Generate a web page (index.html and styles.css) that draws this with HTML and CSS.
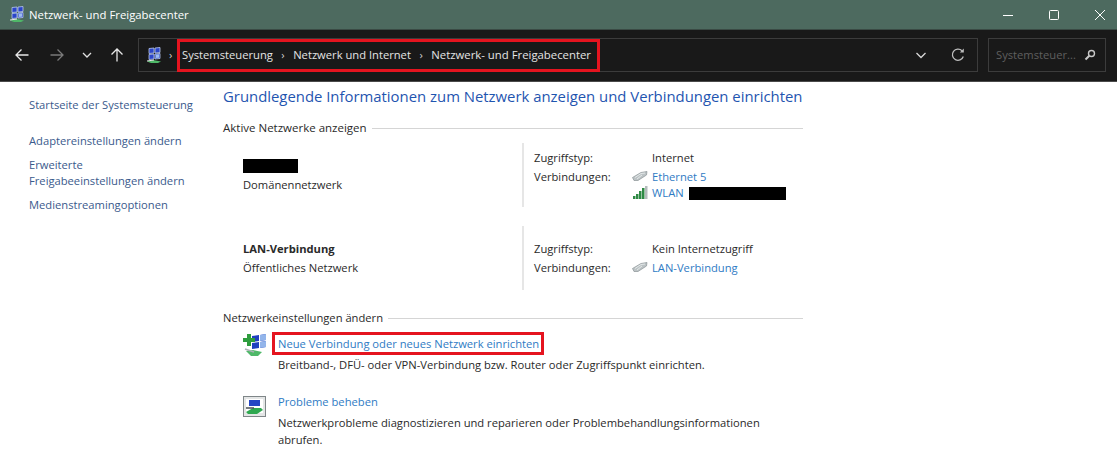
FILE: index.html
```html
<!DOCTYPE html>
<html lang="de">
<head>
<meta charset="utf-8">
<title>Netzwerk- und Freigabecenter</title>
<link rel="stylesheet" href="styles.css">
</head>
<body>
<header class="titlebar">
  <div class="title-left">
    <svg class="app-icon" width="16" height="17" viewBox="0 0 16 17"><path d="M3 1.500l5-.5v5l-5 .5zM9 1l5-.5v5L9 6zM3 7.500L8 7v5l-5 .5zM9 7l5-.5v5L9 12z" fill="#2b45c8" stroke="#b9c8ee" stroke-width=".8"/><path d="M10 7.500l3-.3v3.600l-3 .3z" fill="#9dbcf0"/><path d="M1 14.500l6-1.500 8 1.500-3 1.500H5z" fill="#4fb868"/><path d="M1 14l7-1" stroke="#e6e6e6"/></svg>
    <span class="title-text">Netzwerk- und Freigabecenter</span>
  </div>
  <div class="win-controls">
    <svg width="12" height="12" viewBox="0 0 12 12"><path d="M1 6.500h10" stroke="#fff"/></svg>
    <svg width="12" height="12" viewBox="0 0 12 12"><rect x="1.500" y="1.500" width="9" height="9" rx="1" fill="none" stroke="#fff"/></svg>
    <svg width="12" height="12" viewBox="0 0 12 12"><path d="M1 1l10 10M11 1L1 11" stroke="#fff"/></svg>
  </div>
</header>
<nav class="toolbar">
  <div class="nav-buttons">
    <svg width="16" height="16" viewBox="0 0 16 16"><path d="M14.500 8H2M7.500 2.500L2 8l5.500 5.500" fill="none" stroke="#e8e8e8" stroke-width="1.300"/></svg>
    <svg width="16" height="16" viewBox="0 0 16 16"><path d="M1.500 8H14M8.500 2.500L14 8l-5.500 5.500" fill="none" stroke="#7a7a7a" stroke-width="1.300"/></svg>
    <svg class="small" width="10" height="10" viewBox="0 0 10 10"><path d="M1 3l4 4 4-4" fill="none" stroke="#e0e0e0" stroke-width="1.300"/></svg>
    <svg width="16" height="16" viewBox="0 0 16 16"><path d="M8 14.500V2M2.500 7.500L8 2l5.500 5.500" fill="none" stroke="#e8e8e8" stroke-width="1.300"/></svg>
  </div>
  <div class="address">
    <div class="crumb-root">
      <svg width="16" height="17" viewBox="0 0 16 17"><path d="M3 1.500l5-.5v5l-5 .5zM9 1l5-.5v5L9 6zM3 7.500L8 7v5l-5 .5zM9 7l5-.5v5L9 12z" fill="#2b45c8" stroke="#b9c8ee" stroke-width=".8"/><path d="M10 7.500l3-.3v3.600l-3 .3z" fill="#9dbcf0"/><path d="M1 14.500l6-1.500 8 1.500-3 1.500H5z" fill="#4fb868"/><path d="M1 14l7-1" stroke="#e6e6e6"/></svg>
      <span class="sep">›</span>
    </div>
    <div class="crumbs">
      <span>Systemsteuerung</span><span class="sep">›</span><span>Netzwerk und Internet</span><span class="sep">›</span><span class="crumb-last">Netzwerk- und Freigabecenter</span>
    </div>
    <div class="address-tools">
      <svg width="12" height="12" viewBox="0 0 12 12"><path d="M1.500 4L6 8.500 10.500 4" fill="none" stroke="#d8d8d8" stroke-width="1.300"/></svg>
      <svg width="16" height="16" viewBox="0 0 16 16"><path d="M13.300 9.500A5.600 5.600 0 1 1 12 3.800" fill="none" stroke="#bdbdbd" stroke-width="1.300"/><path d="M13.800 1.500v4h-4z" fill="#bdbdbd"/></svg>
    </div>
  </div>
  <div class="search">
    <span>Systemsteuer...</span>
    <svg width="12" height="12" viewBox="0 0 12 12"><circle cx="7.500" cy="4.500" r="3" fill="none" stroke="#c8c8c8" stroke-width="1.400"/><path d="M5.300 6.700L1.500 10.500" stroke="#c8c8c8" stroke-width="2"/></svg>
  </div>
</nav>
<div class="page">
  <aside class="sidebar">
    <a class="home">Startseite der Systemsteuerung</a>
    <a>Adaptereinstellungen ändern</a>
    <a>Erweiterte Freigabeeinstellungen ändern</a>
    <a>Medienstreamingoptionen</a>
  </aside>
  <main class="content">
    <h1>Grundlegende Informationen zum Netzwerk anzeigen und Verbindungen einrichten</h1>
    <h2 class="section active"><span>Aktive Netzwerke anzeigen</span></h2>
    <section class="network first">
      <div class="net-name">
        <div class="redact name-redact"></div>
        <div>Domänennetzwerk</div>
      </div>
      <div class="net-info">
        <div class="info-row"><span class="label">Zugriffstyp:</span><span>Internet</span></div>
        <div class="info-row conn"><span class="label">Verbindungen:</span>
          <div class="links">
            <a class="conn-link"><svg class="plug" width="16" height="11" viewBox="0 0 16 11"><path d="M.500 6.500L9 1.500l6-1-.5 3.500L6 9.500H2z" fill="#bcc3c5" stroke="#8b9396" stroke-width=".7"/><path d="M3 6.500l6-4 4-.5M5 8l5-4" fill="none" stroke="#eef1f1" stroke-width=".8"/></svg>Ethernet 5</a>
            <a class="conn-link wlan"><svg class="plug" width="16" height="13" viewBox="0 0 16 13"><path d="M1 10h2.500v3H1zM4 8h2.500v5H4zM7 5h2.500v8H7zM10 2h2.500v11H10z" fill="#2f8a45"/><rect x="13" y="0" width="2.500" height="13" fill="#b4bcbc"/></svg>WLAN<span class="redact wlan-redact"></span></a>
          </div>
        </div>
      </div>
    </section>
    <section class="network second">
      <div class="net-name">
        <div class="bold">LAN-Verbindung</div>
        <div>Öffentliches Netzwerk</div>
      </div>
      <div class="net-info">
        <div class="info-row"><span class="label">Zugriffstyp:</span><span>Kein Internetzugriff</span></div>
        <div class="info-row conn2"><span class="label">Verbindungen:</span>
          <a class="conn-link"><svg class="plug" width="16" height="11" viewBox="0 0 16 11"><path d="M.500 6.500L9 1.500l6-1-.5 3.500L6 9.500H2z" fill="#bcc3c5" stroke="#8b9396" stroke-width=".7"/><path d="M3 6.500l6-4 4-.5M5 8l5-4" fill="none" stroke="#eef1f1" stroke-width=".8"/></svg>LAN-Verbindung</a>
        </div>
      </div>
    </section>
    <h2 class="section settings"><span>Netzwerkeinstellungen ändern</span></h2>
    <section class="task task-new">
      <svg class="task-icon" width="24" height="24" viewBox="0 0 24 24"><path d="M9 3l7-1v6l-7 1zM17 2l6-1v6l-6 1zM9 10l7-1v6l-7 1zM17 9l6-1v6l-6 1z" fill="#1f3fc0"/><path d="M17 2l6-1v6l-6 1zM17 9l6-1v6l-6 1z" fill="#93b5ea"/><path d="M4 1h4v4h4v4H8v4H4V9H0V5h4z" fill="#2e9d3e"/><path d="M3 18l7-1 9 2-4 4H8z" fill="#4fb868"/><path d="M2 16l9 3" stroke="#a9b1b4" stroke-width="1.800"/></svg>
      <div class="task-text">
        <a class="marked">Neue Verbindung oder neues Netzwerk einrichten</a>
        <p>Breitband-, DFÜ- oder VPN-Verbindung bzw. Router oder Zugriffspunkt einrichten.</p>
      </div>
    </section>
    <section class="task task-fix">
      <svg class="task-icon" width="24" height="22" viewBox="0 0 24 22"><rect x=".500" y=".500" width="22" height="20" fill="#e4e6e6" stroke="#7f8688"/><rect x="3" y="3" width="17" height="14" fill="#fff"/><path d="M6 4h11v6H6z" fill="#2446c4"/><path d="M3 16l7-4h8l2 2-6 4H5z" fill="#2fa850"/><path d="M3 12h8" stroke="#4a5054" stroke-width="1.500"/></svg>
      <div class="task-text">
        <a>Probleme beheben</a>
        <p>Netzwerkprobleme diagnostizieren und reparieren oder Problembehandlungsinformationen abrufen.</p>
      </div>
    </section>
  </main>
</div>
</body>
</html>
```
FILE: styles.css
```css
* { box-sizing: border-box; }
html, body { margin: 0; height: 100%; }
body {
  width: 1117px;
  height: 462px;
  overflow: hidden;
  background: #fff;
  color: #2a2a2a;
  font-family: "Open Sans", "Noto Sans", "Liberation Sans", sans-serif;
  font-size: 11.2px;
  line-height: 16px;
}
a { color: #2f7bc4; display: block; }
h1, h2, p { margin: 0; font-weight: 400; }

.titlebar {
  height: 30px;
  background: #4d6a5f;
  color: #fff;
  display: flex;
  justify-content: space-between;
  align-items: center;
  border-bottom: 1px solid #3a4a44;
  padding: 0 0 0 9px;
}
.title-left { display: flex; align-items: center; gap: 4px; }
.title-text { font-size: 11.350px; }
.win-controls { display: flex; gap: 34px; padding-right: 11px; }

.toolbar {
  height: 52px;
  background: #191919;
  display: flex;
  align-items: center;
  padding: 0 11px 1px 14px;
  border-bottom: 1px solid #4a4a4a;
}
.nav-buttons { width: 124px; display: flex; align-items: center; gap: 19px; }
.nav-buttons .small { margin: 0 -2.500px 0 -2px; }
.nav-buttons svg:last-child { margin-left: 0; }
.address {
  width: 840px;
  height: 34px;
  border: 1px solid #3c3c3c;
  display: flex;
  align-items: center;
  color: #e4e4e4;
}
.crumb-root { width: 39px; display: flex; align-items: center; padding-left: 7px; gap: 7px; }
.crumbs {
  width: 423px;
  height: 33px;
  margin-left: -1px;
  border: 3px solid #e5141f;
  display: flex;
  align-items: center;
  gap: 8.500px;
  padding-left: 2px;
  flex: none;
}
.crumb-last { font-size: 11.350px; }
.sep { color: #d0d0d0; }
.address-tools { margin-left: auto; display: flex; align-items: center; gap: 23px; padding-right: 11px; }
.search {
  width: 118px;
  height: 34px;
  margin-left: 10px;
  border: 1px solid #3c3c3c;
  display: flex;
  align-items: center;
  justify-content: space-between;
  padding: 0 9px 0 7px;
  color: #5f5f5f;
}

.page { display: flex; }
.sidebar { width: 223px; padding: 15px 28px 0 29px; flex: none; }
.sidebar a { color: #3a5a8c; margin-bottom: 8px; }
.sidebar .home { margin-bottom: 20px; }
.content { width: 580px; flex: none; }
h1 {
  font-size: 14.880px;
  line-height: 20px;
  color: #1f55b0;
  margin-top: 4px;
  white-space: nowrap;
}
.section {
  font-size: inherit;
  line-height: 16px;
  display: flex;
  align-items: center;
  gap: 5px;
  margin-top: 14px;
}
.section.active { font-size: 11.500px; }
.section::after { content: ""; flex: 1; height: 1px; background: #d5d5d5; }
.section.settings { margin-top: 20px; }

.network { display: flex; height: 64px; }
.network.first { margin-top: 7px; }
.network.second { margin-top: 19px; }
.net-name { width: 299px; padding: 9px 0 0 20px; }
.network.second .net-name { padding-top: 15px; }
.network.second .net-name .bold { margin-bottom: 3px; }
.redact { background: #000; }
.name-redact { width: 55px; height: 14px; margin: 7px 0 4px; }
.net-name .bold { font-weight: 700; }
.net-info { flex: 1; border-left: 2px solid #e6e6e6; padding: 7px 0 0 10px; }
.network.second .net-info { padding-top: 15px; }
.info-row { display: flex; }
.info-row.conn { margin-top: 3px; }
.info-row.conn2 { margin-top: 3px; }
.label { width: 118px; flex: none; }
.links { display: flex; flex-direction: column; }
.conn-link { display: flex; align-items: center; position: relative; }
.plug { position: absolute; left: -20px; top: 2px; }
.conn-link.wlan .plug { top: 1px; }
.wlan-redact { display: block; width: 97px; height: 13px; margin-left: 5px; }

.task { display: flex; }
.task-icon { flex: none; margin: 2px 11px 0 0; }
.task-new { margin: 5px 0 0 20px; height: 58px; }
.task-fix { margin: 0 0 0 20px; }
.task-fix .task-icon { margin-top: 7px; margin-right: 11px; }
.task-fix .task-text a { margin-top: 5px; }
.task p { margin-top: 4px; width: 510px; line-height: 17px; }
.marked {
  border: 3px solid #e5141f;
  margin-left: -6px;
  margin-top: 1px;
  width: 272px;
  height: 23px;
  padding: 1px 0 0 3px;
  white-space: nowrap;
}
.task-new p { margin-top: 1px; }
```
